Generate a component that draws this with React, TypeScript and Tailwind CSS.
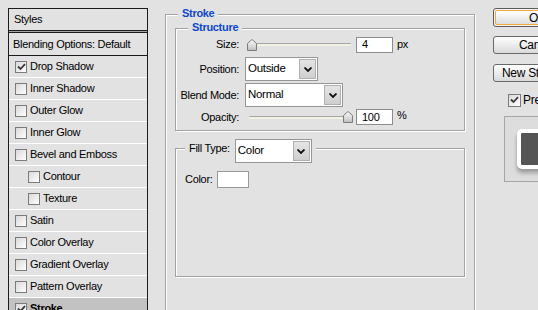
import React from "react";

const BG = "bg-[#e2e2e2]";

function CheckMark() {
  return (
    <svg width="9" height="8" viewBox="0 0 9 8" className="absolute left-[1px] top-[1px]">
      <path d="M1 3.5 L3.5 6 L8 1.2" fill="none" stroke="#3a3a3a" strokeWidth="1.8" />
    </svg>
  );
}

function Checkbox({ checked, size = 12 }: { checked?: boolean; size?: number }) {
  return (
    <div
      className={`relative shrink-0 border border-[#7b7b7b] bg-gradient-to-br from-[#d9d9d9] to-white ${
        size === 12 ? "w-[12px] h-[12px]" : "w-[13px] h-[13px]"
      }`}
    >
      {checked && <CheckMark />}
    </div>
  );
}

function Chevron() {
  return (
    <svg width="8" height="5" viewBox="0 0 8 5">
      <path d="M0.5 0.5 L4 4 L7.5 0.5" fill="none" stroke="#111" strokeWidth="1.8" />
    </svg>
  );
}

function Select({ value, w }: { value: string; w: string }) {
  return (
    <div className={`${w} h-[24px] flex border border-[#969696] bg-white shrink-0`}>
      <div className="flex-1 flex items-center pl-[2px] text-[11.5px]">{value}</div>
      <div className="w-[17px] my-[1px] mr-[1px] flex items-center justify-center border border-[#b0b0b0] bg-gradient-to-b from-[#e4e4e4] to-[#cfcfcf]">
        <Chevron />
      </div>
    </div>
  );
}

function Thumb() {
  return (
    <svg width="10" height="12" viewBox="0 0 10 12">
      <defs>
        <linearGradient id="tg" x1="0" y1="0" x2="0" y2="1">
          <stop offset="0" stopColor="#ffffff" />
          <stop offset="1" stopColor="#bdbdbd" />
        </linearGradient>
      </defs>
      <path d="M0.5 4.5 L5 0.5 L9.5 4.5 L9.5 11.5 L0.5 11.5 Z" fill="url(#tg)" stroke="#7d7d7d" />
    </svg>
  );
}

function Slider({ right }: { right?: boolean }) {
  return (
    <div className="relative w-[106px] h-[12px] flex items-center shrink-0">
      <div className="mx-[2px] flex-1 h-[3px] border-t border-[#a6a6a6] bg-[#f3f1e4] rounded-[1px]" />
      <div className={`absolute top-0 ${right ? "right-0" : "left-0"}`}>
        <Thumb />
      </div>
    </div>
  );
}

function NumInput({ value }: { value: string }) {
  return (
    <div className="w-[37px] h-[16px] border border-[#8c8c8c] bg-white flex items-center pl-[5px] text-[11px] shrink-0">
      {value}
    </div>
  );
}

const rows: { label: string; checked?: boolean; indent?: boolean; selected?: boolean }[] = [
  { label: "Drop Shadow", checked: true },
  { label: "Inner Shadow" },
  { label: "Outer Glow" },
  { label: "Inner Glow" },
  { label: "Bevel and Emboss" },
  { label: "Contour", indent: true },
  { label: "Texture", indent: true },
  { label: "Satin" },
  { label: "Color Overlay" },
  { label: "Gradient Overlay" },
  { label: "Pattern Overlay" },
  { label: "Stroke", checked: true, selected: true },
];

const etched = "border border-[#a3a3a3] shadow-[1px_1px_0_#ffffff,inset_1px_1px_0_#ffffff]";

export default function App() {
  return (
    <div
      className={`w-[538px] h-[310px] overflow-hidden ${BG} flex items-start text-[11px] text-black tracking-[-0.3px] font-['Liberation_Sans',Arial,sans-serif]`}
    >
      {/* Left styles panel */}
      <div className="mt-[8px] ml-[8px] w-[140px] shrink-0 border border-[#1c1c1c]">
        <div className="h-[21px] flex items-center pl-[5px]">Styles</div>
        <div className="h-[1px] bg-[#1c1c1c]" />
        <div className="h-[1px] bg-[#a5a5a5]" />
        <div className="h-[1px] bg-[#1c1c1c]" />
        <div className="h-[22px] flex items-center pl-[4px]">Blending Options: Default</div>
        <div className="h-[1px] bg-[#1c1c1c]" />
        {rows.map((r) => (
          <div
            key={r.label}
            className={`h-[22px] flex items-center gap-[3px] border-b border-white ${
              r.indent ? "pl-[19px]" : "pl-[6px]"
            } ${r.selected ? "bg-[#c2c2c2] font-bold" : ""}`}
          >
            <Checkbox checked={r.checked} />
            <span>{r.label}</span>
          </div>
        ))}
      </div>

      {/* Stroke group */}
      <div className={`relative ml-[17px] mt-[14px] w-[310px] h-[330px] shrink-0 ${etched} pt-[13px] px-[9px]`}>
        <div className={`absolute left-[12px] top-[-8px] px-[4px] ${BG} font-bold text-[#0b47d0] leading-[13px]`}>
          Stroke
        </div>

        {/* Structure */}
        <div className={`relative h-[103px] ${etched} pt-[7px]`}>
          <div className={`absolute left-[12px] top-[-8px] px-[4px] ${BG} font-bold text-[#0b47d0] leading-[13px]`}>
            Structure
          </div>
          <div className="flex flex-col">
            <div className="h-[17px] flex items-center">
              <div className="w-[63px] text-right shrink-0">Size:</div>
              <div className="ml-[8px]">
                <Slider />
              </div>
              <div className="ml-[3px]">
                <NumInput value="4" />
              </div>
              <div className="ml-[4px]">px</div>
            </div>
            <div className="mt-[4px] h-[24px] flex items-center">
              <div className="w-[63px] text-right shrink-0">Position:</div>
              <div className="ml-[6px]">
                <Select value="Outside" w="w-[73px]" />
              </div>
            </div>
            <div className="mt-[2px] h-[24px] flex items-center">
              <div className="w-[63px] text-right shrink-0">Blend Mode:</div>
              <div className="ml-[6px]">
                <Select value="Normal" w="w-[98px]" />
              </div>
            </div>
            <div className="mt-[2px] h-[16px] flex items-center">
              <div className="w-[63px] text-right shrink-0">Opacity:</div>
              <div className="ml-[8px]">
                <Slider right />
              </div>
              <div className="ml-[3px]">
                <NumInput value="100" />
              </div>
              <div className="ml-[4px] self-start leading-[12px]">%</div>
            </div>
          </div>
        </div>

        {/* Fill type */}
        <div className={`relative mt-[17px] h-[129px] ${etched} pt-[22px] pl-[9px]`}>
          <div className={`absolute left-[9px] top-[-10px] px-[4px] ${BG} flex items-center`}>
            <span className="mt-[-6px]">Fill Type:</span>
            <div className="ml-[5px]">
              <Select value="Color" w="w-[77px]" />
            </div>
          </div>
          <div className="flex items-center">
            <span>Color:</span>
            <div className="ml-[4px] w-[32px] h-[17px] border border-[#9a9a9a] bg-white" />
          </div>
        </div>
      </div>

      {/* Right column */}
      <div className="ml-[18px] mt-[8px] w-[90px] shrink-0 flex flex-col text-[12px]">
        <div className="h-[19px] w-[88px] rounded-[3px] border border-[#5c5c5c] p-[1px] bg-[#f4f4f4]">
          <div className="h-full rounded-[2px] border border-[#f2a93b] bg-gradient-to-b from-white to-[#dedede] flex items-center pl-[33px]">
            OK
          </div>
        </div>
        <div className="mt-[9px] h-[18px] w-[88px] rounded-[3px] border border-[#6a6a6a] bg-gradient-to-b from-white to-[#d9d9d9] flex items-center pl-[25px]">
          Cancel
        </div>
        <div className="mt-[10px] h-[18px] w-[88px] rounded-[3px] border border-[#6a6a6a] bg-gradient-to-b from-white to-[#d9d9d9] flex items-center pl-[8px]">
          New Style...
        </div>
        <div className="mt-[9px] ml-[15px] flex items-center gap-[2px]">
          <Checkbox checked size={13} />
          <span>Preview</span>
        </div>
        <div className="mt-[7px] ml-[11px] w-[80px] h-[66px] border border-[#a6a6a6] bg-[#dddddd] pt-[12px] pl-[12px]">
          <div className="w-[42px] h-[40px] rounded-[5px] border-[4px] border-white bg-[#555555] shadow-[0_4px_4px_rgba(0,0,0,0.3)]" />
        </div>
      </div>
    </div>
  );
}
